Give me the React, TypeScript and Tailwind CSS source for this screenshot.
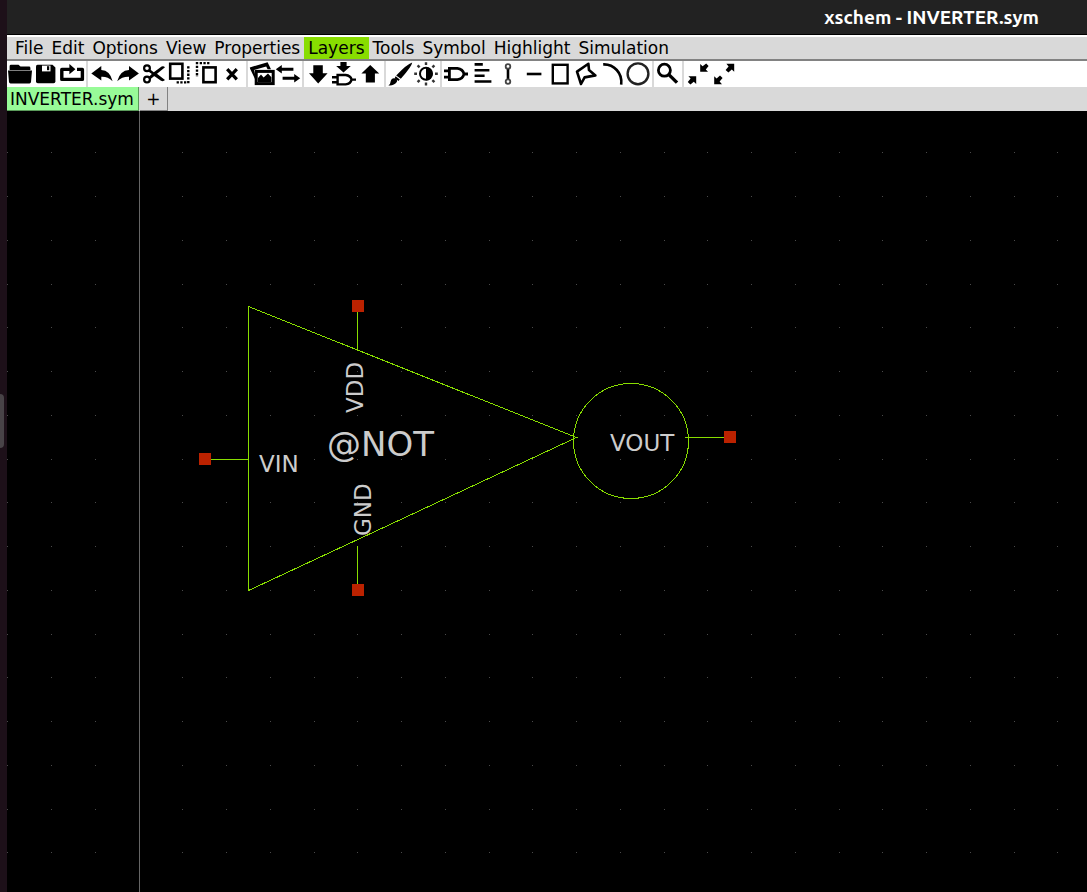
import type { ReactNode } from "react";

const menus = [
  "File",
  "Edit",
  "Options",
  "View",
  "Properties",
  "Layers",
  "Tools",
  "Symbol",
  "Highlight",
  "Simulation",
];

type Tool = { label: string; art: ReactNode };

const solid = { fill: "#000", stroke: "none" };

const toolGroups: Tool[][] = [
  [
    {
      label: "Open",
      art: <path {...solid} d="M2.6 9V5.2Q2.6 3.8 4 3.8H11.5L13.5 5.6H22Q23.4 5.6 23.4 7V9ZM1 9.6H25L24 21Q23.8 22.4 22.5 22.4H3.5Q2.2 22.4 2 21Z" />,
    },
    {
      label: "Save",
      art: (
        <>
          <path {...solid} d="M4.5 3.7H19.5L22.4 6.5V20.5Q22.4 22.3 20.6 22.3H4.8Q3 22.3 3 20.5V5.2Q3 3.7 4.5 3.7Z" />
          <path fill="#fff" stroke="none" d="M9 4.6H17.5V10.4H9Z" />
          <path {...solid} d="M14 5.2H16.2V9.2H14Z" />
        </>
      ),
    },
    {
      label: "Merge",
      art: (
        <>
          <path strokeWidth="3.4" strokeLinejoin="round" d="M12 8.4H2.8V18.4H23.4V8.4H18" />
          <path {...solid} d="M10.4 3L16.4 8.2L10.4 13.2Z" />
        </>
      ),
    },
  ],
  [
    { label: "Undo", art: <path {...solid} d="M2.3 12.4L12.3 5V9Q21 9.4 23.6 20.2Q18.6 15.4 12.3 15.8V19.6Z" /> },
    { label: "Redo", art: <path {...solid} d="M23.9 12.4L14 5V9Q5.1 9.4 2.2 20.2Q7.6 15.4 14 15.8V19.6Z" /> },
    {
      label: "Cut",
      art: (
        <>
          <circle cx="6" cy="7.2" r="2.9" strokeWidth="2.2" />
          <circle cx="6" cy="18.6" r="2.9" strokeWidth="2.2" />
          <path {...solid} d="M8.2 7.8L12.8 11.2L20.6 5.6Q22.6 4.8 24 6.2L9 18.6L7.2 16.6L10.8 13L7 10.2ZM12.8 14.8L15.6 12.6L24 19Q22.4 20.8 20 19.8Z" />
        </>
      ),
    },
    {
      label: "Copy",
      art: (
        <>
          <rect x="3.2" y="2.8" width="12.2" height="14.8" strokeWidth="2.6" />
          <path strokeWidth="2.4" strokeDasharray="2.3 1.4" d="M21.3 5.2V22.4M9.6 21.4H20" />
        </>
      ),
    },
    {
      label: "Paste",
      art: (
        <>
          <rect x="10.4" y="6.4" width="12.2" height="14.8" strokeWidth="2.6" />
          <path strokeWidth="2.4" strokeDasharray="2.3 1.4" d="M4 1V16M6.7 2.1H17" />
        </>
      ),
    },
    { label: "Delete", art: <path strokeWidth="3.2" d="M8.2 8.2L17.8 18.4M17.8 8.2L8.2 18.4" /> },
  ],
  [
    {
      label: "View images",
      art: (
        <>
          <rect x="7.2" y="10.4" width="17" height="12.2" strokeWidth="3" />
          <path {...solid} d="M9 21V17L12 13.6L14.6 16.6L19 12.6L22.4 16.2V21ZM0.8 6.4L18.6 1.2L22 8.2H18.6L17.2 5.4L5 9L6 13V18L1.2 8Z" />
        </>
      ),
    },
    {
      label: "Toggle",
      art: (
        <>
          <path strokeWidth="3" d="M5 8.3H18.4M7.6 17.3H21" />
          <path {...solid} d="M0.8 8.3L6.8 4V12.6ZM25.2 17.3L19.2 13V21.6Z" />
        </>
      ),
    },
  ],
  [
    { label: "Push into schematic", art: <path {...solid} d="M8.3 4.3H17.8V12.2H22.6L13.2 22.4L4 12.2H8.3Z" /> },
    {
      label: "Push into symbol",
      art: (
        <>
          <path {...solid} d="M9.4 1H15.6V5H19.8L12.5 11.4L5.2 5H9.4Z" />
          <path strokeWidth="2.4" d="M6.6 14H14.6Q19.6 14.6 20.6 18.6Q19.6 22.8 14.6 23.4H6.6ZM1 16.3H6M1 21.3H6M20.6 18.6H25" />
        </>
      ),
    },
    { label: "Pop", art: <path {...solid} d="M8.8 21.4V12.6H4.4L13.2 4L22.2 12.6H17.9V21.4Z" /> },
  ],
  [
    {
      label: "Change colors",
      art: (
        <path {...solid} d="M25.2 1.4Q25 5 13.8 17.8L9.2 14.4Q20 3 25.2 1.4ZM8.6 15.2L12.8 18.6L11.4 20L7.8 17ZM7.4 17.2Q11 18.2 9.8 21Q7 25 1.4 24.4Q3.6 23 3.6 20.4Q4.6 16.8 7.4 17.2Z" />
      ),
    },
    {
      label: "Light and dark",
      art: (
        <>
          <circle cx="13" cy="12.8" r="6" strokeWidth="2" />
          <path {...solid} d="M13 6.2A6.6 6.6 0 0 1 13 19.4Z" />
          <path
            stroke="#333"
            strokeWidth="2.4"
            d="M13 1.2V4M13 21.6V24.4M1.2 12.8H4M22 12.8H24.8M4.6 4.4L6.6 6.4M19.4 19.2L21.4 21.2M4.6 21.2L6.6 19.2M19.4 6.4L21.4 4.4"
          />
        </>
      ),
    },
  ],
  [
    {
      label: "Insert symbol",
      art: <path strokeWidth="2.8" d="M6.4 7.4H14.4Q19.8 8 21 13Q19.8 18 14.4 18.6H6.4ZM1 9.8H6M1 16.2H6M21 13H25" />,
    },
    { label: "Insert text", art: <path strokeWidth="2.6" d="M5.6 3.4H13.8M5.6 9.2H20.4M5.6 14.8H15.6M5.6 20.5H22.4" /> },
    {
      label: "Insert wire",
      art: (
        <>
          <path strokeWidth="2.6" d="M13 7.6V18.4" />
          <circle cx="13" cy="5.4" r="2.3" stroke="#444" strokeWidth="1.8" />
          <circle cx="13" cy="20.6" r="2.3" stroke="#444" strokeWidth="1.8" />
        </>
      ),
    },
    { label: "Insert line", art: <path strokeWidth="2.6" d="M5.8 13H20.4" /> },
    { label: "Insert rectangle", art: <rect x="5.8" y="3.8" width="14.8" height="18.6" strokeWidth="2.4" /> },
    {
      label: "Insert polygon",
      art: <path strokeWidth="2.6" strokeLinejoin="round" d="M15.4 2.8L4 10.6L8 23L11.6 16.4L22.4 14.4L16 9Z" />,
    },
    { label: "Insert arc", art: <path strokeWidth="2.6" d="M4.2 3.4C15 3 23.6 12 22.2 23.6" /> },
    { label: "Insert circle", art: <circle cx="13" cy="12.8" r="10.4" stroke="#222" strokeWidth="2.4" /> },
  ],
  [
    {
      label: "Zoom box",
      art: (
        <>
          <circle cx="9.4" cy="9.2" r="6" strokeWidth="2.8" />
          <path strokeWidth="3.4" d="M13.6 13.4L22 21.6" />
        </>
      ),
    },
  ],
  [
    {
      label: "Zoom out",
      art: <path {...solid} d="M15.2 3L17.6 5.2L21.2 2.6L23.6 5L20.8 8.4L23 10.8H15.2ZM11.2 15.2V23L8.8 20.8L5.4 23.4L2.8 21L5.6 17.6L3.4 15.2Z" />,
    },
    {
      label: "Zoom in",
      art: <path {...solid} d="M23.2 2.8V10.8L20.8 8.6L17.4 11.6L14.6 9L17.6 5.4L15.4 2.8ZM3.2 23.2V15.2L5.6 17.4L9 14.6L11.6 17L8.6 20.6L11 23.2Z" />,
    },
  ],
];

const gridStep = 43.75;
const gridDots = Array.from({ length: 40 * 24 }, (_, i) => ({
  x: Math.floor(7.8 + (i % 40) * gridStep),
  y: Math.floor(152.8 + Math.floor(i / 40) * gridStep),
}));

const pins = [
  { name: "VIN", x: 199, y: 453 },
  { name: "VDD", x: 352, y: 300 },
  { name: "GND", x: 352, y: 584 },
  { name: "VOUT", x: 724, y: 431 },
];

function TitleBar() {
  return (
    <header className="flex h-[35px] items-center justify-end border-b border-black bg-[#222222] pr-12">
      <h1 className="font-['Ubuntu','Noto_Sans',sans-serif] text-[19px] leading-6 font-bold text-white">
        xschem - INVERTER.sym
      </h1>
    </header>
  );
}

function MenuBar() {
  return (
    <nav className="flex h-[26px] border-t-2 border-b-2 border-t-white border-b-[#828282] bg-[#d9d9d9] pl-1">
      {menus.map((name) => (
        <button
          key={name}
          type="button"
          className={name === "Layers" ? "bg-[#88dd00] px-1 leading-[22px]" : "px-1 leading-[22px]"}
        >
          {name}
        </button>
      ))}
    </nav>
  );
}

function ToolBar() {
  return (
    <div role="toolbar" aria-label="Tools" className="flex bg-white">
      {toolGroups.map((group, g) => (
        <div key={g} className="flex">
          {g > 0 && <span className="mx-px w-0.5 bg-[#d9d9d9]" />}
          {group.map((tool) => (
            <button key={tool.label} type="button" aria-label={tool.label} className="size-[26px]">
              <svg viewBox="0 0 26 26" className="size-[26px]" fill="none" stroke="#000">
                {tool.art}
              </svg>
            </button>
          ))}
        </div>
      ))}
    </div>
  );
}

function TabBar() {
  return (
    <div className="flex h-6 bg-[#d9d9d9]">
      <button
        type="button"
        className="border-r border-b border-[#5a9a5a] bg-[#98fb98] pr-1 pl-[3px] leading-[22px]"
      >
        INVERTER.sym
      </button>
      <button type="button" className="ml-px w-7 border-r border-b border-[#828282] leading-6">
        +
      </button>
    </div>
  );
}

function SymbolCanvas() {
  return (
    <main className="flex grow bg-black">
      <svg className="min-h-full w-full grow" aria-label="Inverter symbol">
        <g transform="translate(-7 -111)">
          <g fill="#4a4a4a" shapeRendering="crispEdges">
            {gridDots.map((dot, i) => (
              <rect key={i} x={dot.x} y={dot.y} width="1" height="1" />
            ))}
          </g>
          <rect x="139" y="111" width="1" height="4000" fill="#666666" />
          <g fill="none" stroke="#88dd00" shapeRendering="crispEdges">
            <path d="M248.5 306.5L576.5 437.5L248.5 590.5Z" />
            <circle cx="631" cy="441" r="57.5" />
            <path d="M211 459.5H248M357.5 312V350M357.5 546V584M685 437.5H724" />
          </g>
          <g fill="#bb2200">
            {pins.map((pin) => (
              <rect key={pin.name} x={pin.x} y={pin.y} width="12" height="12" />
            ))}
          </g>
          <g fill="#cccccc" fontSize="23">
            <text x="259" y="472">VIN</text>
            <text x="610" y="451">VOUT</text>
            <text transform="translate(363 413) rotate(-90)">VDD</text>
            <text transform="translate(371 536) rotate(-90)">GND</text>
            <text x="327" y="456" fontSize="34">@NOT</text>
          </g>
        </g>
      </svg>
    </main>
  );
}

export default function App() {
  return (
    <div className="flex min-h-screen bg-[#1d1019] font-['DejaVu_Sans',sans-serif] text-[17px] text-black">
      <aside className="flex w-[7px] shrink-0 flex-col pt-[394px]">
        <div className="h-[54px] w-1 rounded-r bg-[#484347]" />
      </aside>
      <div className="flex min-w-0 grow flex-col">
        <TitleBar />
        <MenuBar />
        <ToolBar />
        <TabBar />
        <SymbolCanvas />
      </div>
    </div>
  );
}
